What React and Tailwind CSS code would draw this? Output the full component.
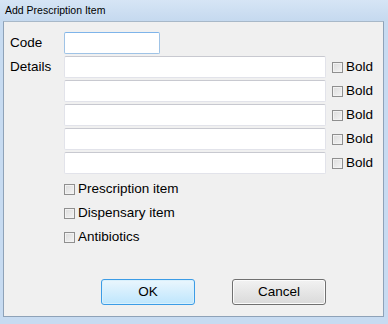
const details = [0, 1, 2, 3, 4];
const options = ["Prescription item", "Dispensary item", "Antibiotics"];

function Check() {
  return (
    <span className="block w-[11px] h-[11px] border border-[#8f8f8f] bg-gradient-to-br from-[#dcdcdc] to-[#f4f4f4] shadow-[inset_0_0_0_1px_#f2f2f2]" />
  );
}

function TextBox({ w, focus }) {
  return (
    <div
      className={
        "h-[22px] bg-white border rounded-[2px] " +
        w +
        (focus
          ? " border-[#9fc3e6] border-t-[#7eb4ea]"
          : " border-[#e2e3ea] border-t-[#c8c9d0]")
      }
    />
  );
}

export default function App() {
  return (
    <div
      className="w-[388px] h-[324px] bg-[#c7dbf1] flex flex-col text-black"
      style={{ fontFamily: '"Liberation Sans", Arial, sans-serif' }}
    >
      <div className="h-[21px] flex items-center pl-[5px] text-[10.5px] bg-gradient-to-b from-[#d6e5f5] to-[#c5d9ef]">
        Add Prescription Item
      </div>
      <div className="ml-[3px] mr-[4px] h-[296px] bg-[#f0f0f0] border border-[#8ea2b8] border-t-[#a8b8c8] flex flex-col pt-[10px] pl-[6px] text-[13.5px]">
        <div className="flex items-center h-[22px]">
          <span className="w-[54px]">Code</span>
          <TextBox w="w-[96px]" focus />
        </div>
        <div className="flex mt-[2px]">
          <span className="w-[54px] h-[22px] flex items-center">Details</span>
          <div className="flex flex-col gap-[2px]">
            {details.map((i) => (
              <div key={i} className="flex items-center">
                <TextBox w="w-[262px]" />
                <span className="ml-[6px]">
                  <Check />
                </span>
                <span className="ml-[3px]">Bold</span>
              </div>
            ))}
          </div>
        </div>
        <div className="flex flex-col mt-[3px] pl-[54px]">
          {options.map((o) => (
            <div key={o} className="h-[24px] flex items-center">
              <Check />
              <span className="ml-[3px]">{o}</span>
            </div>
          ))}
        </div>
        <div className="flex mt-[30px] pl-[91px] gap-[37px]">
          <button className="w-[94px] h-[26px] rounded-[3px] border border-[#3c9ce6] bg-gradient-to-b from-[#eaf6fd] to-[#bee6fd] shadow-[inset_0_0_0_1px_#d9f0fc]">
            OK
          </button>
          <button className="w-[94px] h-[26px] rounded-[3px] border border-[#707070] bg-gradient-to-b from-[#f2f2f2] to-[#dadada] shadow-[inset_0_0_0_1px_#fbfbfb]">
            Cancel
          </button>
        </div>
      </div>
    </div>
  );
}
